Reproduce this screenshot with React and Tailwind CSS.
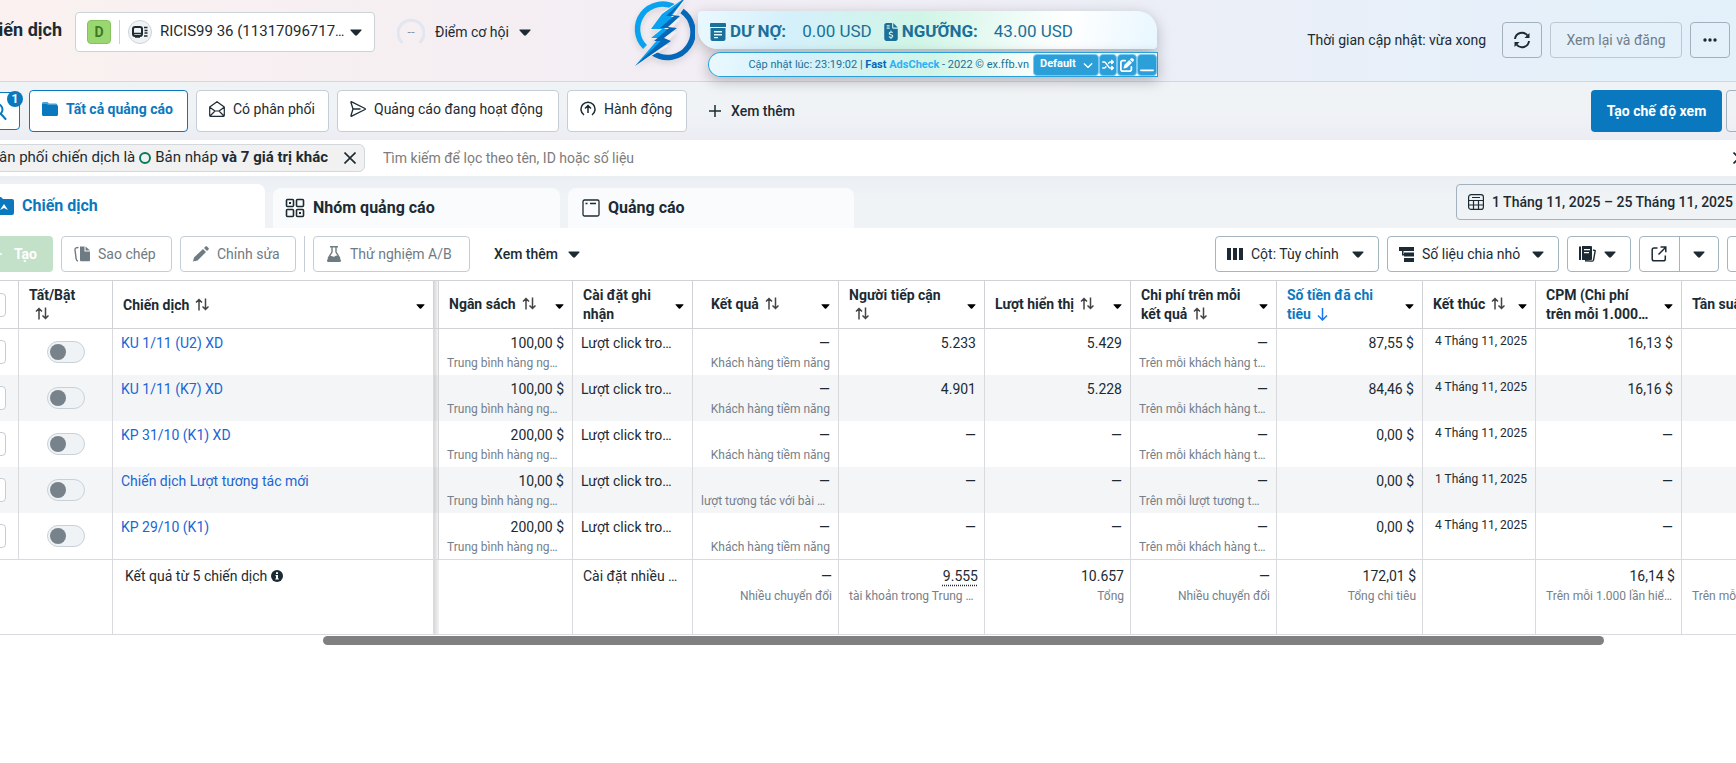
import React from "react";
import { FaShuffle, FaPenToSquare, FaWindowMinimize, FaFileInvoiceDollar, FaChevronDown } from "react-icons/fa6";

const svgBase = { fill: "none", stroke: "currentColor", "aria-hidden": true };

function Caret({ small }) {
  return (
    <svg viewBox="0 0 12 7" className={small ? "mt-1 h-[5px] w-[9px] shrink-0 text-black" : "h-[7px] w-3 shrink-0"} fill="currentColor" aria-hidden="true">
      <path d="M1 .5h10c.6 0 .8.6.4 1L7 6.200c-.6.6-1.400.6-2 0L.6 1.500C.2 1.100.4.5 1 .5z" />
    </svg>
  );
}

function AccountIcon() {
  return (
    <svg {...svgBase} viewBox="0 0 24 24" className="h-6 w-6 shrink-0">
      <circle cx="12" cy="12" r="11.500" fill="#f0f2f5" stroke="#cbd2d9" />
      <rect x="5" y="7" width="9" height="9" rx="2" stroke="#1c2b33" strokeWidth="2" />
      <path d="M6 13.500h7" stroke="#1c2b33" strokeWidth="1.500" />
      <path d="M16 7.500h3.500M16.500 10.500h3M16.500 13h3M16 16h3.500M7 17h5" stroke="#1c2b33" strokeWidth="1.500" />
    </svg>
  );
}

function Gauge() {
  return (
    <span className="relative flex h-7 w-7 items-center justify-center">
      <svg {...svgBase} viewBox="0 0 28 28" className="absolute inset-0 h-7 w-7">
        <path d="M4.500 24A13 13 0 1 1 23.500 24" stroke="#e1e6f0" strokeWidth="3" strokeLinecap="round" />
      </svg>
      <span className="font-['Noto_Sans',sans-serif] text-xs leading-4 text-[#8a949e]">--</span>
    </span>
  );
}

function BoltLogo() {
  return (
    <svg viewBox="0 0 62 72" className="h-[72px] w-[62px] drop-shadow-md" aria-hidden="true">
      <g fill="none" strokeWidth="5.500">
        <path d="M42 11.500A25 25 0 0 0 12 51" stroke="#0aa2ee" />
        <path d="M49 15A25 25 0 0 1 20 57" stroke="#0467b8" />
      </g>
      <path d="M54 0 28 17 17 34l10-1-10 10 8 0L4 68l32-18-4-2 12-12-7-1 10-12-6-1z" fill="#f2eef4" />
      <path d="M53 1 29 18 18 33h11L18 42h8L2 70 32 45h-7l14-12h-8l14-12h-7z" fill="#0aa2ee" />
      <path d="M53 1 38 19l9 1-12 11 9 1-13 10 7 3L2 70l26-25h-7l15-13h-9l14-12h-8z" fill="#0467b8" />
    </svg>
  );
}

function ListDoc() {
  return (
    <svg viewBox="0 0 16 18" className="h-[18px] w-4 shrink-0" fill="currentColor" aria-hidden="true">
      <path d="M1 0h14a1 1 0 0 1 1 1v3H0V1a1 1 0 0 1 1-1zM.5 5h15v11a2 2 0 0 1-2 2h-11a2 2 0 0 1-2-2zM4 8v1.500h8V8zm0 3v1.500h8V11zm0 3v1.200h4V14z" fillRule="evenodd" />
    </svg>
  );
}

function RefreshIcon() {
  return (
    <svg {...svgBase} viewBox="0 0 18 18" className="h-[18px] w-[18px]" strokeWidth="2">
      <path d="M2 8A7 7 0 0 1 14.500 4.500M16 10A7 7 0 0 1 3.500 13.500" />
      <path d="M16.500 2v5h-5zM1.500 16v-5h5z" fill="currentColor" stroke="none" />
    </svg>
  );
}

function SearchIcon() {
  return (
    <svg {...svgBase} viewBox="0 0 18 18" className="h-[18px] w-[18px]" strokeWidth="2">
      <circle cx="8" cy="7.500" r="5.500" />
      <path d="m12 12 4.500 5" strokeLinecap="round" />
    </svg>
  );
}

function FolderIcon() {
  return (
    <svg viewBox="0 0 16 15" className="h-[15px] w-4 shrink-0" fill="currentColor" aria-hidden="true">
      <path d="M0 3V1.500C0 .7.7 0 1.500 0h4L7 1.500h6.500c1 0 1.700.5 2 1.500z" opacity=".7" />
      <path d="M0 3h14.500c.8 0 1.500.7 1.500 1.500v8c0 .8-.7 1.500-1.500 1.500h-13C.7 14 0 13.300 0 12.500zM0 3V2h5l1 1z" />
    </svg>
  );
}

function MailOpenIcon() {
  return (
    <svg {...svgBase} viewBox="0 0 16 16" className="h-4 w-4 shrink-0" strokeWidth="1.200" strokeLinejoin="round">
      <path d="M.7 6v8.500c0 .5.3.8.8.8h13c.5 0 .8-.3.8-.8V6L8 .7zM.7 6.200 6 10h4l5.300-3.800M1 15l5-5M15 15l-5-5" />
    </svg>
  );
}

function SendIcon() {
  return (
    <svg {...svgBase} viewBox="0 0 16 16" className="h-4 w-4 shrink-0" strokeWidth="1.300" strokeLinejoin="round">
      <path d="M1 1.500c-.2-.6.2-.9.700-.7L15 7.500c.5.2.5.700 0 1L1.700 15.200c-.5.200-.9-.1-.7-.700L3 8zM3 8h7.500" />
    </svg>
  );
}

function UpCircleIcon() {
  return (
    <svg {...svgBase} viewBox="0 0 16 16" className="h-4 w-4 shrink-0" strokeWidth="1.500">
      <path d="M4 14A7 7 0 1 1 12 14M8 12V5M5 7.500 8 4.500l3 3" />
    </svg>
  );
}

function CampaignFolder() {
  return (
    <svg viewBox="0 0 20 18" className="h-[18px] w-5 shrink-0" fill="currentColor" aria-hidden="true">
      <path d="M0 2a2 2 0 0 1 2-2h5l2 2h9a2 2 0 0 1 2 2v12a2 2 0 0 1-2 2H2a2 2 0 0 1-2-2z" />
      <path d="m6 13 4-6 4 6-4-2z" fill="#fff" />
    </svg>
  );
}

function GridIcon() {
  return (
    <svg {...svgBase} viewBox="0 0 20 20" className="h-5 w-5 shrink-0" strokeWidth="1.600">
      <rect x="1.500" y="1.500" width="7" height="7" rx="1" />
      <rect x="11.500" y="1.500" width="7" height="7" rx="1" />
      <rect x="1.500" y="11.500" width="7" height="7" rx="1" />
      <rect x="11.500" y="11.500" width="7" height="7" rx="1" />
      <path d="M4 4h2v2H4zM14 14h2v2h-2z" fill="currentColor" stroke="none" />
    </svg>
  );
}

function AdIcon() {
  return (
    <svg {...svgBase} viewBox="0 0 18 18" className="h-[18px] w-[18px] shrink-0" strokeWidth="1.300">
      <rect x="1" y="1" width="16" height="16" rx="1.500" />
      <path d="M3.500 4.500h2M8 4.500h6" strokeWidth="1.600" />
    </svg>
  );
}

function CalendarIcon() {
  return (
    <svg {...svgBase} viewBox="0 0 16 16" className="h-4 w-4 shrink-0" strokeWidth="1.200">
      <rect x=".6" y=".6" width="14.800" height="14.800" rx="2.500" />
      <path d="M4 3.500h8M.6 6.500h14.800M.6 11h14.800M5.500 6.500v9M10.500 6.500v9" />
    </svg>
  );
}

function CopyIcon() {
  return (
    <svg viewBox="0 0 16 16" className="h-4 w-4 shrink-0" fill="currentColor" aria-hidden="true">
      <path d="M6 .5h4.500v5H16V14c0 .8-.5 1.300-1.300 1.300H7.300C6.500 15.300 6 14.800 6 14zM11.500.5l4.500 4h-4.500z" />
      <path d="M4.500 1.500C2 1.500.8 2 1 4l1.200 9c.1 1 .6 1.700 1.800 2" fill="none" stroke="currentColor" strokeWidth="1.400" />
    </svg>
  );
}

function PencilIcon() {
  return (
    <svg viewBox="0 0 16 16" className="h-4 w-4 shrink-0" fill="currentColor" aria-hidden="true">
      <path d="M10 3 13 6 4.500 14.500 0 15.500 1 11.500zM11 2l1.500-1.500c.5-.5 1-.5 1.500 0L15.500 2c.5.5.5 1 0 1.500L14 5z" />
    </svg>
  );
}

function FlaskIcon() {
  return (
    <svg viewBox="0 0 16 16" className="h-4 w-4 shrink-0" aria-hidden="true">
      <path d="M4 .7h8M6 1v5L2 12.500M10 1v5l4 6.500" fill="none" stroke="currentColor" strokeWidth="1.400" />
      <path d="M3.500 10c2-1 3.500 1.500 5 .5s2.500-1.500 4-.5l2.300 4c.5 1 0 2-1 2H2.200c-1 0-1.500-1-1-2z" fill="currentColor" />
    </svg>
  );
}

function ColumnsIcon() {
  return (
    <svg viewBox="0 0 16 12" className="h-3 w-4 shrink-0" fill="currentColor" aria-hidden="true">
      <path d="M0 0h4v12H0zM6 0h4v12H6zM12 0h4v12h-4z" />
    </svg>
  );
}

function BreakdownIcon() {
  return (
    <svg viewBox="0 0 15 15" className="h-[15px] w-[15px] shrink-0" fill="currentColor" aria-hidden="true">
      <path d="M0 0h15v4H0zM5 5.500h10v4H5zM5 11h10v4H5z" />
      <path d="M3 3h1.500v4H6v1.500H3z" />
    </svg>
  );
}

function ReportIcon() {
  return (
    <svg viewBox="0 0 17 16" className="h-4 w-[17px] shrink-0" fill="currentColor" aria-hidden="true">
      <path d="M0 .5h2V14H0zM3 0h9a1 1 0 0 1 1 1v12a1 1 0 0 1-1 1H3zm2 3v1.300h6V3zm0 3v1.300h5V6z" fillRule="evenodd" />
      <path d="M14 4l2.200.7-1.700 9.500c-.2.800-.7 1-1.500.9L6 14.800" fill="none" stroke="currentColor" strokeWidth="1.400" />
    </svg>
  );
}

function ExportIcon() {
  return (
    <svg {...svgBase} viewBox="0 0 16 16" className="h-4 w-4 shrink-0" strokeWidth="1.500">
      <path d="M6.500 2H3A1.800 1.800 0 0 0 1.200 3.800V13A1.800 1.800 0 0 0 3 14.800h9.500A1.800 1.800 0 0 0 14.300 13V9.500M9.500 1h5.300v5.300M14.500 1.500 7.500 8.500" />
    </svg>
  );
}

function PlusIcon() {
  return (
    <svg {...svgBase} viewBox="0 0 12 12" className="h-3 w-3 shrink-0" strokeWidth="1.500">
      <path d="M6 0v12M0 6h12" />
    </svg>
  );
}

function CloseIcon() {
  return (
    <svg {...svgBase} viewBox="0 0 12 12" className="h-3 w-3 shrink-0" strokeWidth="1.600">
      <path d="m.5.5 11 11M11.500.5l-11 11" />
    </svg>
  );
}

function SortIcon() {
  return (
    <svg {...svgBase} viewBox="0 0 14 13" className="ml-1.5 inline h-[13px] w-[14px] align-[-1px] text-[#444]" strokeWidth="1.500">
      <path d="M4 12.500V1.500M1 4.500l3-3 3 3M10.500.5v11M7.500 8.500l3 3 3-3" />
    </svg>
  );
}

function SortDownIcon() {
  return (
    <svg {...svgBase} viewBox="0 0 11 13" className="ml-1.5 inline h-[13px] w-[11px] align-[-2px] text-[#1877f2]" strokeWidth="1.500">
      <path d="M5.500 0v12M1 7.500 5.500 12 10 7.500" />
    </svg>
  );
}

function TopBar() {
  const tool = "flex h-[22px] items-center justify-center rounded-sm border border-[#7cc8ee] bg-[#2c9fd8] text-white ";
  return (
    <header className="relative flex h-[82px] items-start border-b border-[#d3d8de] bg-gradient-to-r from-[#fbf1f0] via-[#f0edf5] to-[#e2f1fb]">
      <h1 className="flex h-[60px] w-[102px] items-center justify-end text-lg font-bold whitespace-nowrap">Chiến dịch</h1>
      <button className="mt-3 ml-[13px] flex h-10 w-[300px] items-center rounded border border-[#cbd2d9] bg-white pr-3 pl-[11px]">
        <span className="flex h-6 w-6 items-center justify-center rounded-sm border border-[#84c35c] bg-[#9bd770] text-sm font-bold text-[#3c7a24]">D</span>
        <span className="mx-2 h-6 w-px bg-[#cbd2d9]" />
        <AccountIcon />
        <span className="ml-2 flex-1 text-left text-sm whitespace-nowrap"><span className="text-[15px]">RICIS99 36 (11317096717</span>…</span>
        <Caret />
      </button>
      <button className="mt-[18px] ml-[22px] flex h-7 items-center gap-2.5 text-sm">
        <Gauge />
        <span className="whitespace-nowrap">Điểm cơ hội</span>
        <Caret />
      </button>

      <div className="absolute top-0 left-[673px] z-10 flex items-start text-[#1b7099]">
        <div className="-mt-1"><BoltLogo /></div>
        <div className="mt-[11px] ml-[3px] w-[460px]">
          <div className="flex h-[38px] w-[459px] items-center rounded-sm rounded-tr-[20px] rounded-bl-[20px] bg-[linear-gradient(100deg,#eaf8ff_0%,#d4f0fb_20%,#d0f5e6_48%,#ffffff_80%,#e8f7ff_100%)] pt-1 pl-3 text-[17px] shadow-[0_4px_14px_rgba(0,0,0,0.25)]">
            <ListDoc />
            <b className="ml-1 font-bold">DƯ NỢ:</b>
            <span className="ml-4">0.00 USD</span>
            <FaFileInvoiceDollar className="ml-3 h-[18px] w-[14px]" />
            <b className="ml-1 font-bold">NGƯỠNG:</b>
            <span className="ml-4">43.00 USD</span>
          </div>
          <div className="mt-[3px] ml-2.5 flex h-[25px] items-center justify-end rounded rounded-l-full border border-[#2aa0db] bg-[linear-gradient(100deg,#eaf8ff_0%,#d4f0fb_20%,#d0f5e6_50%,#ffffff_75%)] text-[11px] shadow-[0_4px_14px_rgba(0,0,0,0.25)]">
            <span className="mr-1 pt-0.5 whitespace-nowrap">
              Cập nhật lúc: 23:19:02 | <b className="text-[#0467b8]">Fast</b> <b className="text-[#2eb0f5]">AdsCheck</b> - 2022 © ex.ffb.vn
            </span>
            <span className="relative flex items-center">
              <select aria-label="Chế độ" className="h-[22px] w-[66px] appearance-none rounded-sm border border-[#7cc8ee] bg-[#2c9fd8] pl-1.5 text-[11px] font-bold text-white">
                <option>Default</option>
              </select>
              <FaChevronDown className="pointer-events-none absolute right-1.5 h-2.5 w-2.5 text-white" />
            </span>
            <button aria-label="Trộn" className={tool + "w-[18px]"}><FaShuffle className="h-3 w-3" /></button>
            <button aria-label="Sửa" className={tool + "w-5"}><FaPenToSquare className="h-3.5 w-3.5" /></button>
            <button aria-label="Thu nhỏ" className={tool + "w-5"}><FaWindowMinimize className="h-3.5 w-3.5" /></button>
          </div>
        </div>
      </div>

      <div className="mt-[22px] mr-[46px] ml-auto flex items-center gap-2 text-sm whitespace-nowrap">
        <span className="mr-2">Thời gian cập nhật: vừa xong</span>
        <button aria-label="Làm mới" className="flex h-9 w-10 items-center justify-center rounded border border-[#a3b0bd]"><RefreshIcon /></button>
        <button className="h-9 w-[132px] rounded border border-[#bcc8d3] text-[#717d87]">Xem lại và đăng</button>
        <button aria-label="Thêm" className="flex h-9 w-10 items-center justify-center rounded border border-[#a3b0bd]">
          <svg viewBox="0 0 14 4" className="h-1 w-3.5" fill="currentColor" aria-hidden="true"><circle cx="2" cy="2" r="1.700" /><circle cx="7" cy="2" r="1.700" /><circle cx="12" cy="2" r="1.700" /></svg>
        </button>
      </div>
    </header>
  );
}

function ViewBar() {
  const view = "flex h-[42px] items-center gap-2 rounded border border-[#c5ced6] bg-white px-3 pb-1 ";
  return (
    <nav className="flex h-[58px] items-start gap-2 bg-gradient-to-b from-[#f0f3f6] via-[#f0f3f6] to-[#ebedf3] pt-2 text-sm whitespace-nowrap">
      <button aria-label="Tìm kiếm" className="relative mt-0.5 mr-px flex h-[38px] w-[60px] items-center justify-end rounded border border-[#0a78be] bg-white pr-3 text-[#0a78be]">
        <SearchIcon />
        <span className="absolute -top-0.5 -right-1 flex h-4 w-4 items-center justify-center rounded-full bg-[#0a78be] text-xs font-bold text-white">1</span>
      </button>
      <button className="flex h-[42px] w-[159px] items-center gap-2 rounded border border-[#0a78be] bg-white px-3 pb-1 font-bold text-[#0a78be]"><FolderIcon />Tất cả quảng cáo</button>
      <button className={view + "w-[133px]"}><MailOpenIcon />Có phân phối</button>
      <button className={view + "w-[222px]"}><SendIcon />Quảng cáo đang hoạt động</button>
      <button className={view + "w-[120px]"}><UpCircleIcon />Hành động</button>
      <button className="ml-3.5 flex h-[42px] items-center gap-2.5 font-medium"><PlusIcon />Xem thêm</button>
      <button className="ml-auto h-[42px] w-[131px] rounded bg-[#0a78be] font-bold text-white">Tạo chế độ xem</button>
      <button aria-label="Thêm chế độ xem" className="mr-2.5 -ml-1 h-[42px] w-10 rounded border border-[#a3b0bd]" />
    </nav>
  );
}

function FilterBar() {
  return (
    <div className="flex h-9 items-center bg-white pr-[31px] text-sm whitespace-nowrap">
      <div className="flex h-7 w-[405px] items-center justify-end rounded-md border border-[#d3d8dc] bg-[#f1f1f1] pr-2 text-[15px]">
        <span>Phân phối chiến dịch là</span>
        <span className="mx-1 h-3 w-3 rounded-full border-2 border-[#0b7a5b]" />
        <span>Bản nháp <b className="font-bold">và 7 giá trị khác</b></span>
        <button aria-label="Xóa bộ lọc" className="ml-4"><CloseIcon /></button>
      </div>
      <input aria-label="Tìm kiếm" placeholder="Tìm kiếm để lọc theo tên, ID hoặc số liệu" className="ml-[18px] flex-1 text-sm outline-none placeholder:text-[#7c7c7c]" />
      <button aria-label="Xóa tất cả"><CloseIcon /></button>
    </div>
  );
}

function Tabs() {
  return (
    <div className="flex h-[52px] items-end bg-gradient-to-b from-[#ebeef3] to-[#f0f3f6] to-40% text-base font-bold whitespace-nowrap">
      <div role="tablist" className="flex items-end gap-2">
        <button role="tab" aria-selected="true" className="flex h-11 w-[305px] items-center gap-2 rounded-t-lg bg-white pl-[34px] text-[#0a78be]"><CampaignFolder />Chiến dịch</button>
        <button role="tab" aria-selected="false" className="flex h-10 w-[287px] items-center gap-2 rounded-t-lg bg-[#f9fbfd] pl-3"><GridIcon />Nhóm quảng cáo</button>
        <button role="tab" aria-selected="false" className="flex h-10 w-[286px] items-center gap-2 rounded-t-lg bg-[#f9fbfd] pl-3.5"><AdIcon />Quảng cáo</button>
      </div>
      <button className="mr-3 mb-2 ml-auto flex h-9 w-[308px] items-center gap-2 rounded border border-[#a3b0bd] px-[11px] text-sm font-medium">
        <CalendarIcon />
        <span className="flex-1 text-left">1 Tháng 11, 2025 – 25 Tháng 11, 2025</span>
        <Caret />
      </button>
    </div>
  );
}

function Toolbar() {
  const muted = "flex h-9 items-center gap-2 rounded border border-[#c5ced6] px-3 text-[#6f7b83] ";
  const strong = "flex h-9 items-center justify-between rounded border border-[#a3b5c1] pr-3.5 pl-[11px] ";
  return (
    <div className="flex items-center gap-2 bg-white py-2 pr-[9px] text-sm whitespace-nowrap">
      <button className="flex h-9 w-[93px] items-center justify-end gap-3 rounded bg-[#c2e1c8] pr-4 font-bold text-white"><PlusIcon />Tạo</button>
      <button className={muted + "w-[111px]"}><CopyIcon />Sao chép</button>
      <button className={muted + "w-[116px]"}><PencilIcon />Chỉnh sửa</button>
      <span className="h-9 w-px bg-[#c5ced6]" />
      <button className={muted + "w-[157px]"}><FlaskIcon />Thử nghiệm A/B</button>
      <button className="ml-4 flex items-center gap-2.5 font-medium">Xem thêm<Caret /></button>
      <button className={strong + "ml-auto w-[164px]"}><span className="flex items-center gap-2"><ColumnsIcon />Cột: Tùy chỉnh</span><Caret /></button>
      <button className={strong + "w-[172px]"}><span className="flex items-center gap-2"><BreakdownIcon />Số liệu chia nhỏ</span><Caret /></button>
      <button aria-label="Báo cáo" className={strong + "w-16"}><ReportIcon /><Caret /></button>
      <div className="flex h-9 w-20 rounded border border-[#a3b5c1]">
        <button aria-label="Xuất" className="flex flex-1 items-center justify-center"><ExportIcon /></button>
        <button aria-label="Tùy chọn xuất" className="flex flex-1 items-center justify-center border-l border-[#a3b5c1]"><Caret /></button>
      </div>
      <button aria-label="Biểu đồ" className={strong + "w-10"} />
    </div>
  );
}

const columns = [
  { lines: ["Ngân sách"], sort: true },
  { lines: ["Cài đặt ghi", "nhận"] },
  { lines: ["Kết quả"], sort: true, inset: true },
  { lines: ["Người tiếp cận", ""], sort: true },
  { lines: ["Lượt hiển thị"], sort: true },
  { lines: ["Chi phí trên mỗi", "kết quả"], sort: true },
  { lines: ["Số tiền đã chi", "tiêu"], active: true },
  { lines: ["Kết thúc"], sort: true },
  { lines: ["CPM (Chi phí", "trên mỗi 1.000…"] },
  { lines: ["Tần suất"], sort: true },
];

const lead = "Khách hàng tiềm năng";
const perLead = "Trên mỗi khách hàng t…";
const rows = [
  { name: "KU 1/11 (U2) XD", budget: "100,00 $", result: lead, reach: "5.233", views: "5.429", cost: perLead, spent: "87,55 $", end: "4 Tháng 11, 2025", cpm: "16,13 $" },
  { name: "KU 1/11 (K7) XD", budget: "100,00 $", result: lead, reach: "4.901", views: "5.228", cost: perLead, spent: "84,46 $", end: "4 Tháng 11, 2025", cpm: "16,16 $" },
  { name: "KP 31/10 (K1) XD", budget: "200,00 $", result: lead, reach: "—", views: "—", cost: perLead, spent: "0,00 $", end: "4 Tháng 11, 2025", cpm: "—" },
  { name: "Chiến dịch Lượt tương tác mới", budget: "10,00 $", result: "lượt tương tác với bài …", reach: "—", views: "—", cost: "Trên mỗi lượt tương t…", spent: "0,00 $", end: "1 Tháng 11, 2025", cpm: "—" },
  { name: "KP 29/10 (K1)", budget: "200,00 $", result: lead, reach: "—", views: "—", cost: perLead, spent: "0,00 $", end: "4 Tháng 11, 2025", cpm: "—" },
];

function PinShadow({ line }) {
  return (
    <span className={"absolute inset-y-0 left-0 w-[5px] bg-gradient-to-r from-black/15 to-black/5 " + (line ? "border-r border-[#d5d8db]" : "")} />
  );
}

function Caption({ text }) {
  return (
    <div className={"text-xs leading-5 whitespace-nowrap text-[#75808a] " + (text.endsWith("…") ? "text-left" : "text-right")}>{text}</div>
  );
}

function Value({ value, sub }) {
  return (
    <td className="border-r border-[#d8dadd] px-2 pt-1 text-right align-top">
      <div className="leading-5">{value}</div>
      {sub && <Caption text={sub} />}
    </td>
  );
}

function Total({ value, sub, dotted }) {
  return (
    <td className="border-r pt-1.5 pr-1.5 pl-2.5 text-right align-top">
      <div className="leading-5">{dotted ? <span className="underline decoration-dotted underline-offset-4">{value}</span> : value}</div>
      <Caption text={sub} />
    </td>
  );
}

function Check({ label }) {
  return <input type="checkbox" aria-label={label} className="h-6 w-6 appearance-none rounded border border-[#c5ced6] bg-white align-top" />;
}

function HeadCell({ col, first }) {
  return (
    <th scope="col" className="relative border-y border-r border-[#d0d3d6] p-0 text-left font-bold">
      {first && <PinShadow line />}
      <div className={"flex items-center justify-between pr-2 leading-[19px] whitespace-nowrap " + (first ? "pl-[15px] " : col.inset ? "pl-[18px] " : "pl-2.5 ") + (col.active ? "text-[#0a78be]" : "")}>
        <span>
          {col.lines.map((line, i) => (
            <span key={i} className="block">
              {line}
              {i === col.lines.length - 1 && col.sort && <SortIcon />}
              {i === col.lines.length - 1 && col.active && <SortDownIcon />}
            </span>
          ))}
        </span>
        <Caret small />
      </div>
    </th>
  );
}

function CampaignTable() {
  return (
    <table className="w-full table-fixed border-separate border-spacing-0 text-sm">
      <colgroup>
        <col className="w-[59px]" /><col className="w-[94px]" /><col className="w-[321px]" /><col className="w-[139px]" />
        <col className="w-[120px]" /><col className="w-[146px]" /><col className="w-[146px]" /><col className="w-[146px]" />
        <col className="w-[146px]" /><col className="w-[146px]" /><col className="w-[113px]" /><col className="w-[146px]" /><col />
      </colgroup>
      <thead>
        <tr className="h-[49px]">
          <th scope="col" className="border-y border-r border-[#d0d3d6] p-0 pr-3 text-right align-middle"><Check label="Chọn tất cả" /></th>
          <th scope="col" className="border-y border-r border-[#d0d3d6] p-0 pl-2.5 text-left leading-[19px]">
            <span className="block">Tất/Bật</span><span className="block"><SortIcon /></span>
          </th>
          <th scope="col" className="border-y border-r border-[#d0d3d6] p-0 pr-2 pl-2.5 text-left">
            <div className="flex items-center justify-between"><span>Chiến dịch<SortIcon /></span><Caret small /></div>
          </th>
          {columns.map((c, i) => <HeadCell key={i} col={c} first={i === 0} />)}
        </tr>
      </thead>
      <tbody>
        {rows.map((r) => (
          <tr key={r.name} className="h-[46px] even:bg-[#f4f5f7]">
            <td className="border-r border-[#d8dadd] py-0 pr-3 text-right"><Check label={"Chọn " + r.name} /></td>
            <td className="border-r border-[#d8dadd] p-0 text-center">
              <input type="checkbox" role="switch" aria-label={"Bật " + r.name} className="h-[22px] w-[38px] appearance-none rounded-full border border-[#c9d1d8] bg-[#f0f3f6] p-0.5 align-top before:block before:h-4 before:w-4 before:rounded-full before:bg-[#77828a]" />
            </td>
            <td className="border-r border-[#d8dadd] px-2 pt-1 align-top"><a href="#campaign" className="leading-5 text-[#1a66d2]">{r.name}</a></td>
            <td className="relative border-r border-[#d8dadd] pt-1 pr-2 pl-[13px] text-right align-top">
              <PinShadow line />
              <div className="leading-5">{r.budget}</div>
              <Caption text="Trung bình hàng ng…" />
            </td>
            <td className="border-r border-[#d8dadd] px-2 pt-1 align-top leading-5 whitespace-nowrap">Lượt click tro…</td>
            <Value value="—" sub={r.result} />
            <Value value={r.reach} />
            <Value value={r.views} />
            <Value value="—" sub={r.cost} />
            <Value value={r.spent} />
            <td className="border-r border-[#d8dadd] pt-1 pr-2 text-right align-top text-xs leading-4 whitespace-nowrap">{r.end}</td>
            <Value value={r.cpm} />
            <Value value="" />
          </tr>
        ))}
      </tbody>
      <tfoot>
        <tr className="h-[76px] [&>td]:border-t [&>td]:border-b [&>td]:border-[#d8dadd]">
          <td />
          <td className="border-r" />
          <td className="border-r px-3 pt-1.5 align-top leading-5">
            <span className="flex items-center gap-1">Kết quả từ 5 chiến dịch
              <svg viewBox="0 0 12 12" className="h-3 w-3" aria-hidden="true"><circle cx="6" cy="6" r="6" fill="#1c2b33" /><path d="M5 2.300h2v1.700H5zM4.500 5H7v3.500h.8v1H4.300v-1H5V6h-.5z" fill="#fff" /></svg>
            </span>
          </td>
          <td className="relative border-r"><PinShadow /></td>
          <td className="border-r pt-1.5 pr-2 pl-2.5 align-top leading-5 whitespace-nowrap">Cài đặt nhiều …</td>
          <Total value="—" sub="Nhiều chuyển đổi" />
          <Total value="9.555" sub="tài khoản trong Trung …" dotted />
          <Total value="10.657" sub="Tổng" />
          <Total value="—" sub="Nhiều chuyển đổi" />
          <Total value="172,01 $" sub="Tổng chi tiêu" />
          <td className="border-r" />
          <Total value="16,14 $" sub="Trên mỗi 1.000 lần hiể…" />
          <Total value={"\u00a0"} sub="Trên mỗi tài…" />
        </tr>
      </tfoot>
    </table>
  );
}

export default function App() {
  return (
    <div className="min-h-screen overflow-hidden bg-white font-[Roboto,sans-serif] text-[#1c2b33]">
      <div className="-mx-10">
        <TopBar />
        <ViewBar />
        <FilterBar />
        <main>
          <Tabs />
          <Toolbar />
          <CampaignTable />
          <div className="mt-px mr-[172px] ml-[363px] h-[9px] rounded-full bg-[#808080]" />
        </main>
      </div>
    </div>
  );
}
